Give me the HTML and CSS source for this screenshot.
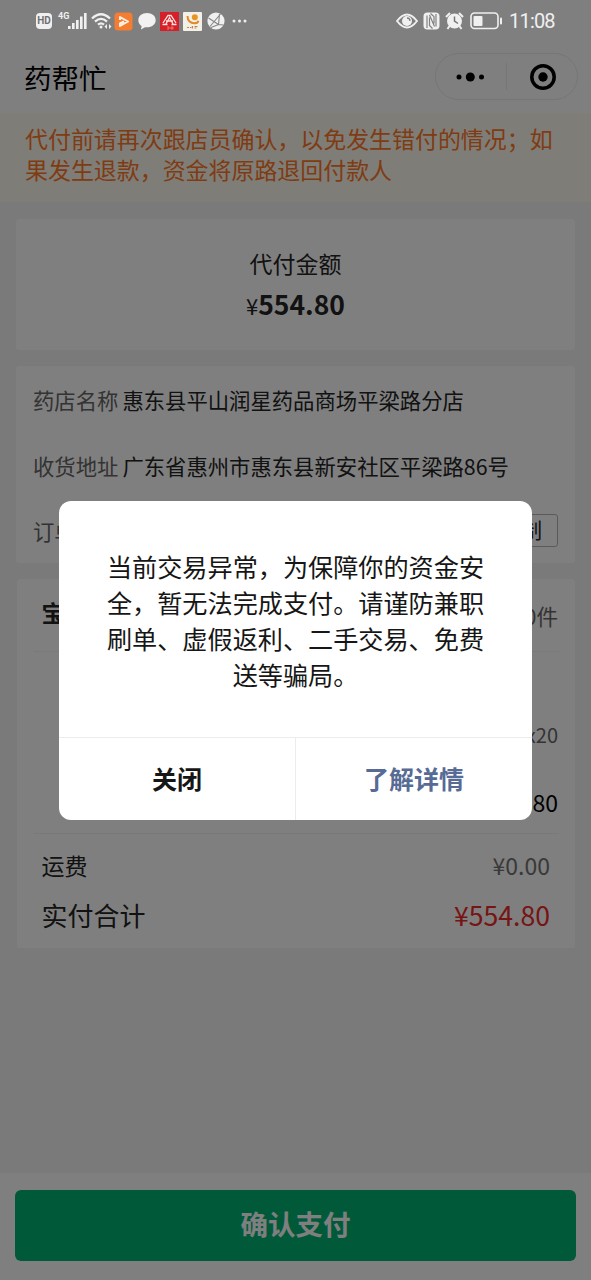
FILE: index.html
```
<!DOCTYPE html>
<html lang="zh-CN">
<head>
<meta charset="utf-8">
<title>药帮忙</title>
<link rel="stylesheet" href="styles.css">
</head>
<body>
<div class="screen">
  <header class="status">
    <div class="status-left">
      <span class="hd">HD</span>
      <span class="net">4G</span>
      <svg class="signal" width="20" height="18" viewBox="0 0 20 18" fill="#f0f0f0"><rect x="0" y="14" width="2.6" height="3"/><rect x="4" y="11" width="2.6" height="6"/><rect x="8" y="8" width="2.6" height="9"/><rect x="12" y="4.500" width="2.600" height="12.500"/><rect x="16" y="1" width="2.600" height="16"/></svg>
      <svg class="wifi" width="22" height="18" viewBox="0 0 22 18" fill="none" stroke="#f0f0f0" stroke-width="2.300"><path d="M1 6.500Q10 -2 19 6.500M4 9.700Q10 4 16 9.700M7 12.700Q10 10 13 12.700"/><circle cx="10" cy="15" r="1.500" fill="#f0f0f0" stroke="none"/><path d="M16 12l-2.500 2.500 2.500 2.500zM18 12l2.500 2.500-2.500 2.500z" fill="#f0f0f0" stroke="none"/></svg>
      <svg class="video" width="19" height="19" viewBox="0 0 19 19"><rect width="18" height="18" x=".5" y=".5" rx="3.500" fill="#f47d31"/><path d="M6 8V5L14 9.500 6 14v-2.500l4-2" fill="none" stroke="#fff2e5" stroke-width="2" stroke-linejoin="round"/></svg>
      <svg class="chat" width="18" height="17" viewBox="0 0 18 17"><path d="M9 0C4 0 .3 3 .3 7.200c0 2.500 1.300 4.500 3.300 5.800L3 16.500l4-2.300c6 .8 10.700-2.400 10.700-7C17.700 3 14 0 9 0z" fill="#f2f2f2"/></svg>
      <svg class="red-app" width="19" height="19" viewBox="0 0 19 19"><rect width="19" height="19" fill="#d51f29"/><path d="M3 11L8 3.500h3L16 11M6 12l3.500-6.500L13 12M2.500 12.500h5M11.500 12.500h5M6 9h7" fill="none" stroke="#ffe4df" stroke-width="1.300"/><path d="M7 15h2v2H7M11 15v2h2v-2z" fill="none" stroke="#f58c7e" stroke-width=".8"/></svg>
      <svg class="white-app" width="19" height="19" viewBox="0 0 19 19"><rect width="19" height="19" rx="1" fill="#f3f0e8"/><circle cx="11.800" cy="5.300" r="3" fill="#e89422"/><path d="M4.500 4c0 5 3 7.500 7.500 7.300 2-.1 3-1 3.300-2.500" fill="none" stroke="#e28924" stroke-width="2"/><path d="M4 15.500h2M7 15.500h1.500M9.500 14v2.500M11.500 14.500h3M11.500 16h2" stroke="#ba8551" stroke-width="1.200"/></svg>
      <svg class="ball" width="18" height="18" viewBox="0 0 18 18"><circle cx="9" cy="9" r="8.600" fill="#f0f0f0"/><path d="M1.500 6l10 6.500M3 14.500L13.500 2M11.500 12.500L12.500 2M4 15.500l7.500-3 5 .5" fill="none" stroke="#858585" stroke-width="1.100"/></svg>
      <svg class="more" width="16" height="4" viewBox="0 0 16 4" fill="#eee"><circle cx="2" cy="2" r="1.500"/><circle cx="7.500" cy="2" r="1.500"/><circle cx="13" cy="2" r="1.500"/></svg>
    </div>
    <div class="status-right">
      <svg class="eye" width="22" height="16" viewBox="0 0 22 16"><path d="M1 8Q11-5 21 8Q11 21 1 8z" fill="none" stroke="#f0f0f0" stroke-width="1.900"/><circle cx="11" cy="8" r="5" fill="#f0f0f0"/><path d="M11 5a3 3 0 0 1 3 3" stroke="#808080" stroke-width="1.300" fill="none"/></svg>
      <svg class="nfc" width="17" height="18" viewBox="0 0 17 18"><rect x=".5" y=".5" width="16" height="17" rx="4" fill="#f0f0f0"/><path d="M4 16V3.500M6.500 3l5 11.500M6.500 5.500v8l3 3M13 14.500V2M7.500 1.500l3.500 3v7" fill="none" stroke="#808080" stroke-width="1.200"/></svg>
      <svg class="alarm" width="19" height="18" viewBox="0 0 19 18"><path d="M1 5l4-4M18 5l-4-4" stroke="#f0f0f0" stroke-width="2"/><circle cx="9.500" cy="9" r="7.500" fill="#f0f0f0"/><path d="M9.500 4.500V9l3.500 2.500" fill="none" stroke="#777" stroke-width="1.500"/><path d="M4.500 14l-2 3M14.500 14l2 3" stroke="#f0f0f0" stroke-width="2"/></svg>
      <svg class="battery" width="33" height="18" viewBox="0 0 33 18"><rect x="1" y="1" width="27" height="15.500" rx="3.500" fill="none" stroke="#f0f0f0" stroke-width="1.600"/><rect x="3.500" y="4" width="9" height="10" rx="1" fill="#f0f0f0"/><rect x="30" y="5.500" width="2" height="7" rx="1" fill="#f0f0f0"/></svg>
      <span class="time">11:08</span>
    </div>
  </header>

  <nav class="nav">
    <h1>药帮忙</h1>
    <div class="capsule">
      <svg width="70" height="46" viewBox="0 0 70 46"><circle cx="23" cy="23" r="2.500"/><circle cx="34.300" cy="23" r="4.500"/><circle cx="45.500" cy="23" r="2.500"/></svg>
      <span class="capsule-line"></span>
      <svg width="70" height="46" viewBox="0 0 70 46"><circle cx="36" cy="23" r="11.200" fill="none" stroke="#000" stroke-width="3.500"/><circle cx="36" cy="23" r="4.700"/></svg>
    </div>
  </nav>
  <p class="notice">代付前请再次跟店员确认，以免发生错付的情况；如<br>果发生退款，资金将原路退回付款人</p>

  <main class="content">
    <section class="card amount">
      <div class="amount-label">代付金额</div>
      <div class="amount-value"><span class="yen">¥</span>554.80</div>
    </section>
    <section class="card details">
      <div class="detail"><span class="label">药店名称</span><span>惠东县平山润星药品商场平梁路分店</span></div>
      <div class="detail"><span class="label">收货地址</span><span>广东省惠州市惠东县新安社区平梁路86号</span></div>
      <div class="detail"><span class="label">订单编号</span><span class="copy">复制</span></div>
    </section>
    <section class="card goods">
      <div class="goods-head"><b>宝贝</b><span class="count">20件</span></div>
      <div class="goods-body"><span class="qty">x20</span><span class="subtotal">¥554.80</span></div>
      <div class="fee"><span>运费</span><span class="fee-value">¥0.00</span></div>
      <div class="total"><span>实付合计</span><span class="total-value">¥554.80</span></div>
    </section>
  </main>

  <footer class="footer"><div class="pay">确认支付</div></footer>

  <div class="mask">
    <div class="dialog">
      <p class="message">当前交易异常，为保障你的资金安<br>全，暂无法完成支付。请谨防兼职<br>刷单、虚假返利、二手交易、免费<br>送等骗局。</p>
      <div class="actions"><div class="action">关闭</div><div class="action link">了解详情</div></div>
    </div>
  </div>
</div>
</body>
</html>
```

FILE: styles.css
```
* { box-sizing: border-box; margin: 0; }
body { font-family: "Noto Sans CJK SC", sans-serif; color: #242424; overflow: hidden; }
svg { display: block; flex: none; }
.screen { position: relative; width: 591px; height: 1280px; display: flex; flex-direction: column; background: #f4f4f4; white-space: nowrap; }

.status { position: relative; z-index: 2; height: 42px; display: flex; justify-content: space-between; padding: 0 36px; color: #f0f0f0; }
.screen::before { content: ""; position: absolute; inset: 0 0 auto; height: 42px; background: #fff; }
.status-left, .status-right { display: flex; align-items: center; height: 42px; }
.hd { width: 16px; height: 16px; border-radius: 4px; background: #f0f0f0; color: #707070; font: bold 10px/16px "Roboto", sans-serif; text-align: center; }
.net { font: bold 9px/10px "Roboto", sans-serif; margin: -10px 0 0 6px; width: 11px; }
.signal { margin-left: -1px; }
.wifi { margin-left: 3px; }
.video { margin-left: 1px; }
.chat { margin-left: 5px; }
.red-app { margin-left: 4px; }
.white-app { margin-left: 4px; }
.ball { margin-left: 5px; }
.more { margin-left: 7px; }
.nfc { margin-left: 5px; }
.alarm { margin-left: 5px; }
.battery { margin-left: 6px; }
.time { font: 20px/42px "Roboto", sans-serif; margin-left: 6px; width: 46px; letter-spacing: -.8px; }

.nav { height: 70px; background: #fff; display: flex; align-items: center; justify-content: space-between; padding: 0 13px 0 24px; }
.nav h1 { color: #000; font-size: 27.5px; font-weight: 400; line-height: 40px; padding-bottom: 1px; }
.capsule { width: 143px; height: 47px; margin-bottom: 1px; border: 1px solid #ececec; border-radius: 24px; display: flex; align-items: center; }
.capsule-line { width: 1px; height: 27px; background: #ececec; }
.notice { height: 90px; padding: 11px 25px 0; background: linear-gradient(#fff 0, #fffbee 2px); color: #ff7626; font-size: 22.95px; line-height: 30.5px; }

.content { flex: 1; display: flex; flex-direction: column; gap: 16px; padding: 17px 16px 0; }
.card { background: #fff; border-radius: 3px; }
.amount { height: 131px; padding-top: 29px; text-align: center; }
.amount-label { font-size: 23px; line-height: 30px; }
.amount-value { font-size: 26.5px; font-weight: 700; line-height: 52px; }
.yen { font-size: 22px; font-weight: 400; }
.details { height: 197px; padding: 1px 17px 0; font-size: 21.35px; }
.detail { height: 65.5px; display: flex; align-items: center; gap: 4px; }
.label { color: #666; }
.copy { margin-left: auto; width: 74px; height: 33px; border: 1.5px solid #b5b5b5; border-radius: 3px; font-size: 21px; line-height: 28px; text-align: center; }
.goods { height: 369px; padding: 0 16px 0 17px; margin-left: 1px; }
.goods-head { height: 73px; border-bottom: 1px solid #f4f4f4; display: flex; align-items: center; justify-content: space-between; padding: 0 1px 0 7.5px; font-size: 23px; }
.goods-head b { padding-bottom: 6px; }
.count { color: #666; font-size: 21.5px; }
.goods-body { height: 182px; border-bottom: 1px solid #f2f2f2; display: flex; flex-direction: column; align-items: flex-end; padding: 67px 1px 0 0; }
.qty { color: #666; font-size: 20px; line-height: 32px; }
.subtotal { color: #000; font-size: 23px; line-height: 34px; margin-top: 34px; }
.fee, .total { display: flex; justify-content: space-between; padding: 0 9px 0 7.5px; }
.fee { font-size: 23px; line-height: 50px; margin-top: 6px; }
.fee-value { color: #727272; }
.total { font-size: 26px; line-height: 50px; }
.total-value { color: #ee2a2a; font-size: 26.6px; }

.footer { height: 107px; padding: 17px 15px 0; background: #fff; }
.pay { height: 71px; border-radius: 6px; background: #00b474; color: #fff; font-size: 27.5px; font-weight: 700; line-height: 66px; text-align: center; }

.mask { position: absolute; inset: 0; z-index: 1; background: rgba(0,0,0,.5); display: flex; justify-content: center; align-items: flex-start; padding-top: 501px; }
.dialog { width: 473px; height: 319px; border-radius: 12px; background: #fff; display: flex; flex-direction: column; }
.message { height: 236px; padding-top: 47px; color: #161616; font-size: 25.15px; line-height: 36px; text-align: center; }
.actions { flex: 1; display: flex; border-top: 1px solid #ececec; }
.action { flex: 1; font-size: 25px; font-weight: 700; line-height: 81px; text-align: center; color: #161616; }
.link { border-left: 1px solid #ececec; color: #576b95; }
```
